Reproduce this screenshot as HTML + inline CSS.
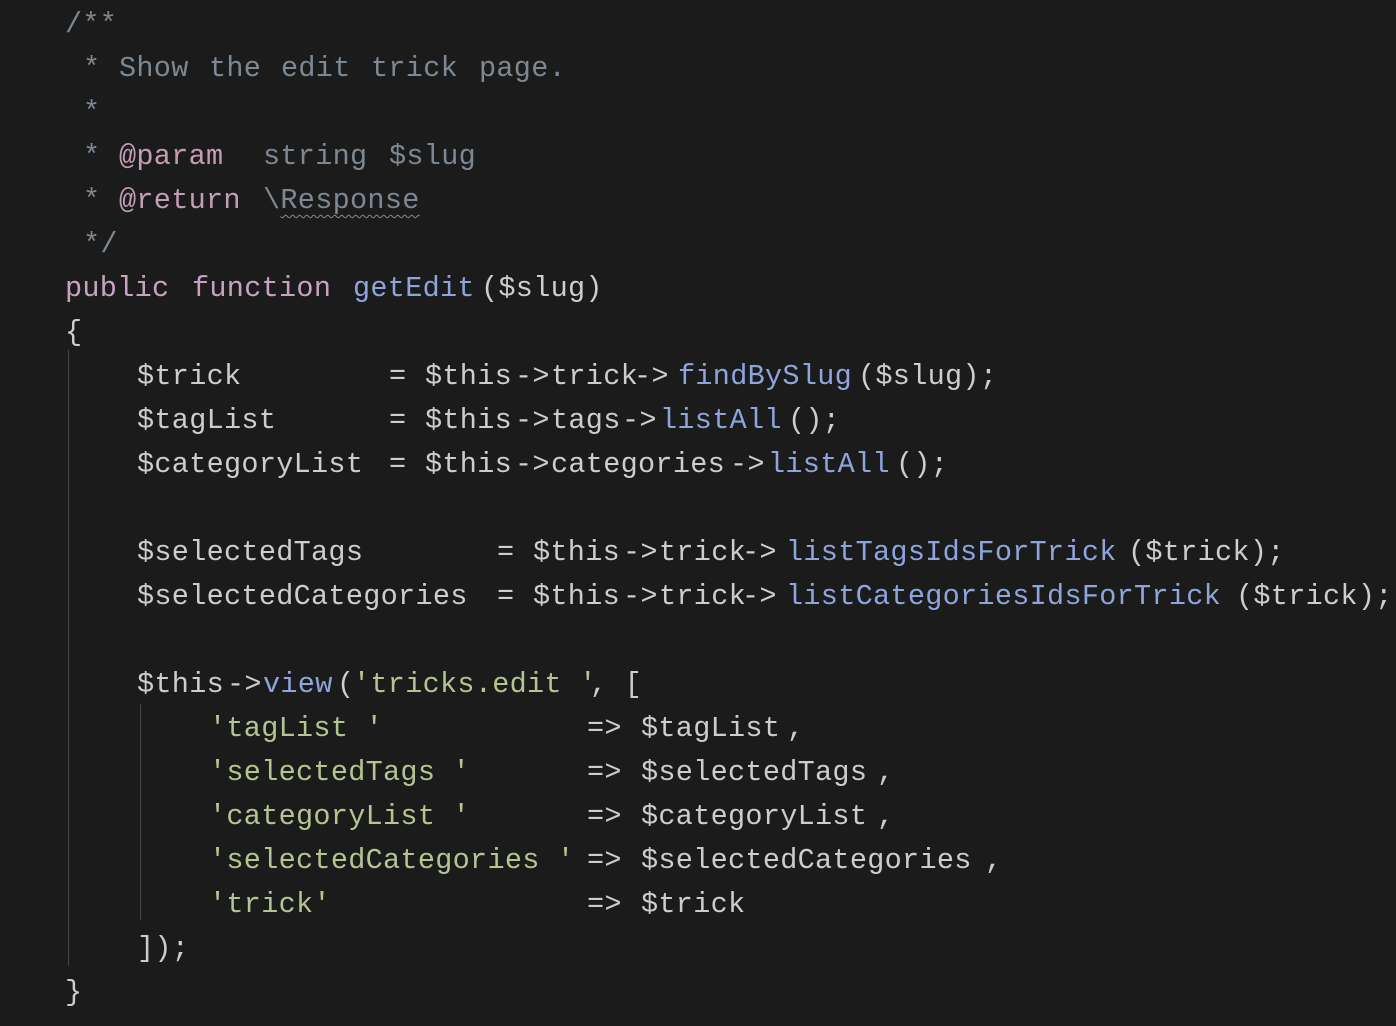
<!DOCTYPE html>
<html><head><meta charset="utf-8"><style>
html,body{margin:0;padding:0;background:#1b1b1b;width:1396px;height:1026px;overflow:hidden}
body{position:relative;font-family:"Liberation Mono","DejaVu Sans Mono",monospace;font-size:28.5px;color:#cdcdcd;letter-spacing:0.3px}
.l{position:absolute;left:0;height:44px;line-height:44px;width:1396px;margin-top:3px}
.l span{position:absolute;white-space:pre;top:0}
.c{color:#7c8893}.k{color:#c8a2c2}.f{color:#8ea4dc}.s{color:#b3c591}.p{color:#c49db4}.d{color:#c0c0c0}
.g{position:absolute;width:1px;background:#454545}
.w{text-decoration:underline wavy #8a8a8a;text-decoration-thickness:1px;text-underline-offset:6px}
</style></head><body>
<div class="g" style="left:68px;top:350px;height:616px"></div>
<div class="g" style="left:140px;top:704px;height:216px"></div>

<div class="l" style="top:0"><span class="c" style="left:65px">/**</span></div>
<div class="l" style="top:44px"><span class="c" style="left:83px">*</span><span class="c" style="left:119px">Show</span><span class="c" style="left:209px">the</span><span class="c" style="left:281px">edit</span><span class="c" style="left:371px">trick</span><span class="c" style="left:479px">page.</span></div>
<div class="l" style="top:88px"><span class="c" style="left:83px">*</span></div>
<div class="l" style="top:132px"><span class="c" style="left:83px">*</span><span class="p" style="left:119px">@param</span><span class="c" style="left:263px">string</span><span class="c" style="left:389px">$slug</span></div>
<div class="l" style="top:176px"><span class="c" style="left:83px">*</span><span class="p" style="left:119px">@return</span><span class="c" style="left:263px">\<span class="w" style="position:static">Response</span></span></div>
<div class="l" style="top:220px"><span class="c" style="left:83px">*/</span></div>
<div class="l" style="top:264px"><span class="k" style="left:65px">public</span><span class="k" style="left:192px">function</span><span class="f" style="left:353px">getEdit</span><span style="left:481px">($slug)</span></div>
<div class="l" style="top:308px"><span style="left:65px">{</span></div>
<div class="l" style="top:352px"><span style="left:137px">$trick</span><span style="left:389px">=</span><span style="left:425px">$this</span><span style="left:515px">-&gt;</span><span style="left:551px">trick</span><span style="left:634px">-&gt;</span><span class="f" style="left:678px">findBySlug</span><span style="left:858px">($slug);</span></div>
<div class="l" style="top:396px"><span style="left:137px">$tagList</span><span style="left:389px">=</span><span style="left:425px">$this</span><span style="left:515px">-&gt;</span><span style="left:551px">tags</span><span style="left:622px">-&gt;</span><span class="f" style="left:660px">listAll</span><span style="left:788px">();</span></div>
<div class="l" style="top:440px"><span style="left:137px">$categoryList</span><span style="left:389px">=</span><span style="left:425px">$this</span><span style="left:515px">-&gt;</span><span style="left:551px">categories</span><span style="left:730px">-&gt;</span><span class="f" style="left:768px">listAll</span><span style="left:896px">();</span></div>
<div class="l" style="top:528px"><span style="left:137px">$selectedTags</span><span style="left:497px">=</span><span style="left:533px">$this</span><span style="left:623px">-&gt;</span><span style="left:659px">trick</span><span style="left:742px">-&gt;</span><span class="f" style="left:786px">listTagsIdsForTrick</span><span style="left:1128px">($trick);</span></div>
<div class="l" style="top:572px"><span style="left:137px">$selectedCategories</span><span style="left:497px">=</span><span style="left:533px">$this</span><span style="left:623px">-&gt;</span><span style="left:659px">trick</span><span style="left:742px">-&gt;</span><span class="f" style="left:786px">listCategoriesIdsForTrick</span><span style="left:1236px">($trick);</span></div>
<div class="l" style="top:660px"><span style="left:137px">$this</span><span style="left:227px">-&gt;</span><span class="f" style="left:263px">view</span><span style="left:337px">(</span><span class="s" style="left:353px">'tricks.edit '</span><span style="left:590px">, [</span></div>
<div class="l" style="top:704px"><span class="s" style="left:209px">'tagList '</span><span style="left:587px">=&gt;</span><span style="left:641px">$tagList</span><span style="left:787px">,</span></div>
<div class="l" style="top:748px"><span class="s" style="left:209px">'selectedTags '</span><span style="left:587px">=&gt;</span><span style="left:641px">$selectedTags</span><span style="left:877px">,</span></div>
<div class="l" style="top:792px"><span class="s" style="left:209px">'categoryList '</span><span style="left:587px">=&gt;</span><span style="left:641px">$categoryList</span><span style="left:877px">,</span></div>
<div class="l" style="top:836px"><span class="s" style="left:209px">'selectedCategories '</span><span style="left:587px">=&gt;</span><span style="left:641px">$selectedCategories</span><span style="left:985px">,</span></div>
<div class="l" style="top:880px"><span class="s" style="left:209px">'trick'</span><span style="left:587px">=&gt;</span><span style="left:641px">$trick</span></div>
<div class="l" style="top:924px"><span style="left:137px">]);</span></div>
<div class="l" style="top:968px"><span style="left:65px">}</span></div>
</body></html>
